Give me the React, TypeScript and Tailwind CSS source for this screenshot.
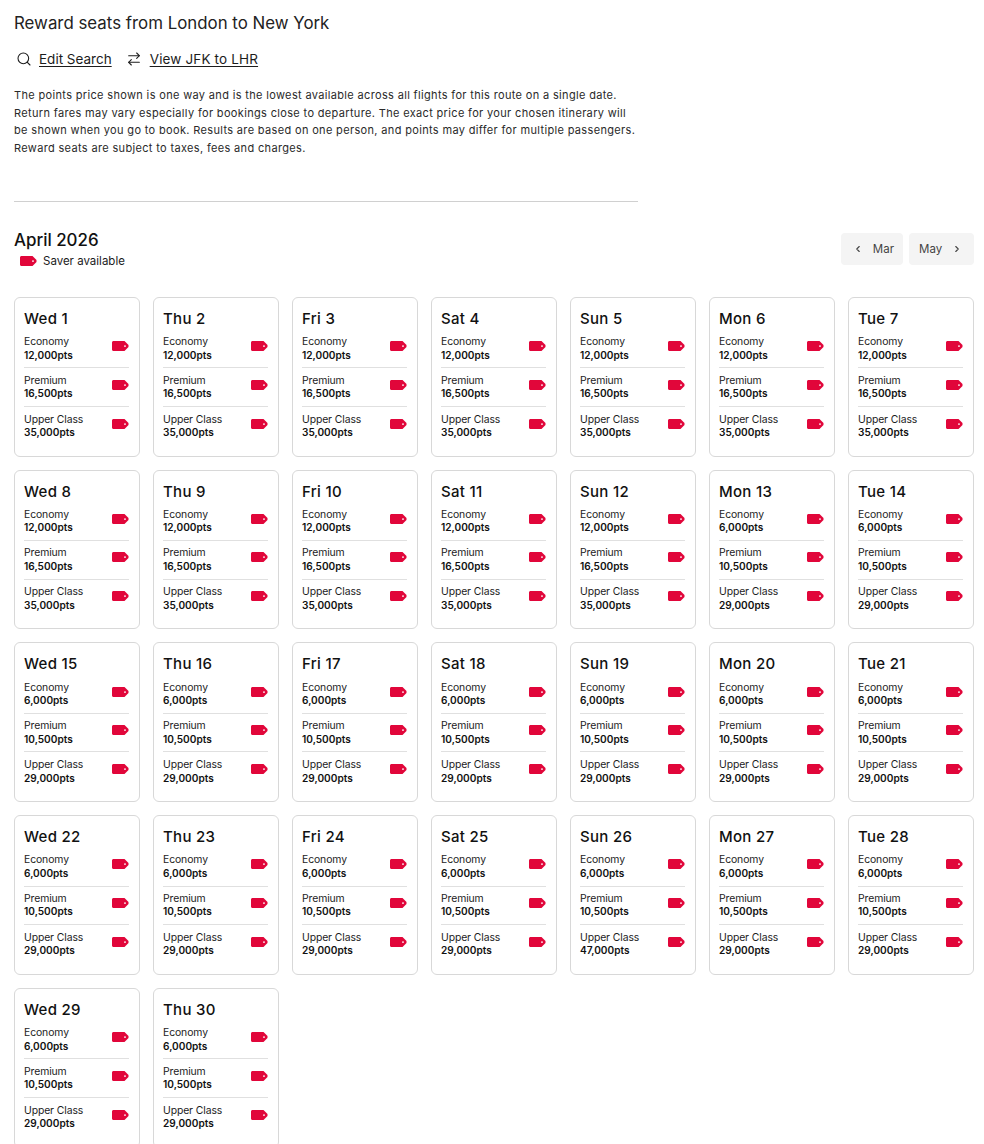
import { ArrowRightLeft, ChevronLeft, ChevronRight, Search } from 'lucide-react';

type Day = { label: string; economy: string; premium: string; upper: string };

const WEEKDAYS = ['Wed', 'Thu', 'Fri', 'Sat', 'Sun', 'Mon', 'Tue'];

const DAYS: Day[] = Array.from({ length: 30 }, (_, i) => {
  const date = i + 1;
  const early = date <= 12;
  return {
    label: `${WEEKDAYS[i % 7]} ${date}`,
    economy: early ? '12,000pts' : '6,000pts',
    premium: early ? '16,500pts' : '10,500pts',
    upper: early ? '35,000pts' : date === 26 ? '47,000pts' : '29,000pts',
  };
});

function SaverTag() {
  return (
    <svg width="17" height="10" viewBox="0 0 17 10" aria-hidden className="shrink-0">
      <path
        fillRule="evenodd"
        d="M1.5 0H12.5L16.5 4V6L12.5 10H1.5C.7 10 0 9.3 0 8.5V1.5C0 .7.7 0 1.5 0ZM13 4.2a.9.9 0 1 0 0 1.8a.9.9 0 1 0 0-1.8Z"
        fill="#e1063a"
      />
    </svg>
  );
}

function FareRow({ cabin, points, last }: { cabin: string; points: string; last?: boolean }) {
  return (
    <div className={`flex h-[38.5px] items-center justify-between ${last ? '' : 'border-b border-[#e0e0e0]'}`}>
      <div className="min-w-0 leading-[12.5px] text-[#1c1c1c]">
        <p className="text-[10.4px] tracking-[-0.1px]">{cabin}</p>
        <p className="text-[10.1px] font-semibold text-[#111]">{points}</p>
      </div>
      <span className="mb-[5px] flex">
        <SaverTag />
      </span>
    </div>
  );
}

function DayCard({ day }: { day: Day }) {
  return (
    <div className="h-[159.75px] rounded-md border border-[#d8d8d8] bg-white pt-[12px] pr-[10px] pl-[9px]">
      <h3 className="mb-[2px] text-[15px] leading-[18px] font-medium tracking-[0.3px] text-[#111]">{day.label}</h3>
      <FareRow cabin="Economy" points={day.economy} />
      <FareRow cabin="Premium" points={day.premium} />
      <FareRow cabin="Upper Class" points={day.upper} last />
    </div>
  );
}

export default function App() {
  return (
    <div className="h-[1144px] overflow-hidden bg-white pr-[10px] pl-[14px] font-['Inter',sans-serif] text-[#1c1c1c]">
      <h1 className="pt-[13px] text-[16.85px] leading-[20px] text-[#222]">Reward seats from London to New York</h1>

      <div className="mt-[16px] flex h-5 items-center text-[13.5px]">
        <Search className="ml-[2px] size-[16px]" strokeWidth={1.6} aria-hidden />
        <a className="ml-[7px] underline underline-offset-2">Edit Search</a>
        <ArrowRightLeft className="ml-[14px] size-[16px]" strokeWidth={1.6} aria-hidden />
        <a className="ml-[8px] tracking-[0.15px] underline underline-offset-2">View JFK to LHR</a>
      </div>

      <p className="mt-[18px] w-[640px] text-[11px] leading-[17.6px] tracking-[0.34px] text-[#2a2a2a]">
        The points price shown is one way and is the lowest available across all flights for this route on a single date.
        <br />
        Return fares may vary especially for bookings close to departure. The exact price for your chosen itinerary will
        <br />
        be shown when you go to book. Results are based on one person, and points may differ for multiple passengers.
        <br />
        Reward seats are subject to taxes, fees and charges.
      </p>

      <hr className="mt-[43.6px] w-[624px] border-[#d0d0d0]" />

      <div className="mt-[31px] flex items-start justify-between">
        <div>
          <h2 className="text-[16.9px] leading-[14px] font-medium text-[#111]">April 2026</h2>
          <div className="mt-[7px] flex items-center text-[11.5px] leading-[14px]">
            <span className="ml-[6px] flex">
              <SaverTag />
            </span>
            <span className="ml-[6px]">Saver available</span>
          </div>
        </div>
        <div className="flex gap-[6px] text-[11.5px] text-[#444]">
          <button className="flex h-8 w-[62px] items-center justify-between rounded bg-[#f4f4f4] pr-[9px] pl-[12px]">
            <ChevronLeft className="size-[10px]" strokeWidth={2.6} aria-hidden />
            <span className="mt-[1px]">Mar</span>
          </button>
          <button className="flex h-8 w-[65px] items-center justify-between rounded bg-[#f4f4f4] pr-[12px] pl-[10px]">
            <span className="mt-[1px]">May</span>
            <ChevronRight className="size-[10px]" strokeWidth={2.6} aria-hidden />
          </button>
        </div>
      </div>

      <div className="mt-[29px] grid grid-cols-[repeat(7,126px)] gap-x-[13px] gap-y-[13px]">
        {DAYS.map((day) => (
          <DayCard key={day.label} day={day} />
        ))}
      </div>
    </div>
  );
}
